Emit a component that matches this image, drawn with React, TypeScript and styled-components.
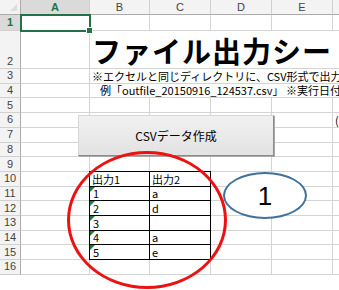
import React from "react";
import styled, { createGlobalStyle, css } from "styled-components";

const Global = createGlobalStyle`
  html, body { margin: 0; padding: 0; background: #fff; overflow: hidden; }
  body { font-family: "Noto Sans CJK JP", sans-serif; }
`;

const Sheet = styled.div`
  position: relative;
  width: 339px;
  height: 290px;
  overflow: hidden;
  background: #fff;
`;

const Grid = styled.div`
  display: grid;
  grid-template-columns: 21px 69px 60px 61px 61px 61px 40px;
  grid-template-rows: 15px 16px 38px repeat(14, 14.714px);
  width: 373px;
  font-family: "Noto Sans CJK JP", sans-serif;
  font-size: 11px;
  color: #000;
`;

const Corner = styled.div`
  box-sizing: border-box;
  background: #f3f3f3;
  border-right: 1px solid #ababab;
  border-bottom: 1px solid #ababab;
  position: relative;
  &::after {
    content: "";
    position: absolute;
    right: 3px;
    bottom: 3px;
    width: 0;
    height: 0;
    border-left: 7px solid transparent;
    border-bottom: 7px solid #dcdcdc;
  }
`;

const ColHead = styled.div<{ $selected?: boolean }>`
  box-sizing: border-box;
  display: flex;
  align-items: center;
  justify-content: center;
  background: ${(p) => (p.$selected ? "#dadada" : "#f3f3f3")};
  color: ${(p) => (p.$selected ? "#217346" : "#444")};
  font-family: "Liberation Sans", sans-serif;
  font-size: 11px;
  font-weight: ${(p) => (p.$selected ? 700 : 400)};
  border-right: 1px solid #d0d0d0;
  border-bottom: 1px solid ${(p) => (p.$selected ? "#217346" : "#ababab")};
`;

const RowHead = styled.div<{ $selected?: boolean; $bottom?: boolean }>`
  box-sizing: border-box;
  display: flex;
  align-items: ${(p) => (p.$bottom ? "flex-end" : "center")};
  justify-content: center;
  background: ${(p) => (p.$selected ? "#dadada" : "#f3f3f3")};
  color: ${(p) => (p.$selected ? "#217346" : "#444")};
  font-family: "Liberation Sans", sans-serif;
  font-size: 11px;
  font-weight: ${(p) => (p.$selected ? 700 : 400)};
  border-right: 1px solid ${(p) => (p.$selected ? "#217346" : "#ababab")};
  border-bottom: 1px solid #d0d0d0;
  line-height: 13px;
`;

const Cell = styled.div<{
  $span?: boolean;
  $boxed?: boolean;
  $top?: boolean;
  $left?: boolean;
  $flag?: boolean;
  $indent?: number;
}>`
  box-sizing: border-box;
  position: relative;
  display: flex;
  align-items: flex-end;
  white-space: nowrap;
  line-height: 13px;
  padding: 0 0 0 ${(p) => p.$indent ?? 2}px;
  border-right: 1px solid ${(p) => (p.$boxed ? "#000" : "#d4d4d4")};
  border-bottom: 1px solid ${(p) => (p.$boxed ? "#000" : "#d4d4d4")};
  ${(p) => p.$span && css`grid-column: 3 / 8; border-right: none;`}
  ${(p) =>
    p.$boxed &&
    css`
      box-shadow: ${p.$left ? "-1px 0 0 #000" : "0 0 0 transparent"},
        ${p.$top ? "0 -1px 0 #000" : "0 0 0 transparent"},
        ${p.$top && p.$left ? "-1px -1px 0 #000" : "0 0 0 transparent"};
    `}
  ${(p) =>
    p.$flag &&
    css`
      &::before {
        content: "";
        position: absolute;
        left: 0;
        top: 0;
        width: 0;
        height: 0;
        border-top: 5px solid #1e7b3c;
        border-right: 5px solid transparent;
      }
    `}
`;

const Title = styled.span`
  font-family: "Noto Sans CJK JP", sans-serif;
  font-weight: 700;
  font-size: 29px;
  line-height: 36px;
  letter-spacing: 1px;
`;

const Selection = styled.div`
  position: absolute;
  left: 20px;
  top: 14px;
  width: 71px;
  height: 18px;
  box-sizing: border-box;
  border: 2px solid #217346;
  pointer-events: none;
  &::after {
    content: "";
    position: absolute;
    right: -4px;
    bottom: -4px;
    width: 5px;
    height: 5px;
    background: #217346;
    border: 1px solid #fff;
  }
`;

const CsvButton = styled.button`
  position: absolute;
  left: 78px;
  top: 115px;
  width: 196px;
  height: 41px;
  box-sizing: border-box;
  margin: 0;
  padding: 0;
  border: 1px solid #d6d6d6;
  border-right-color: #8c8c8c;
  border-bottom-color: #8c8c8c;
  box-shadow: 1px 1px 0 #a8a8a8;
  background: linear-gradient(#f1f1f1, #e2e2e2);
  font-family: "Noto Sans CJK JP", sans-serif;
  font-size: 12px;
  color: #000;
  cursor: default;
`;

const RedCircle = styled.div`
  position: absolute;
  left: 67px;
  top: 151px;
  width: 160px;
  height: 138px;
  box-sizing: border-box;
  border: 3.5px solid #ee1111;
  border-radius: 50%;
  pointer-events: none;
`;

const BlueCallout = styled.div`
  position: absolute;
  left: 223px;
  top: 172px;
  width: 84px;
  height: 47px;
  box-sizing: border-box;
  border: 2.5px solid #41719c;
  border-radius: 50%;
  background: #fff;
  display: flex;
  align-items: center;
  justify-content: center;
  font-family: "Liberation Sans", sans-serif;
  font-size: 26px;
  color: #000;
  line-height: 1;
`;

const cols = ["A", "B", "C", "D", "E", "F"];

const tableRows: Array<[string, string]> = [
  ["1", "a"],
  ["2", "d"],
  ["3", ""],
  ["4", "a"],
  ["5", "e"],
];

export default function App() {
  const rows: React.ReactNode[] = [];
  for (let r = 1; r <= 16; r++) {
    rows.push(
      <RowHead key={`h${r}`} $selected={r === 1} $bottom={r === 2}>
        {r}
      </RowHead>
    );
    if (r >= 2 && r <= 4) {
      rows.push(<Cell key={`a${r}`} />);
      if (r === 2) {
        rows.push(
          <Cell key={`s${r}`} $span>
            <Title>ファイル出力シート</Title>
          </Cell>
        );
      } else if (r === 3) {
        rows.push(
          <Cell key={`s${r}`} $span>
            ※エクセルと同じディレクトリに、CSV形式で出力されます。
          </Cell>
        );
      } else {
        rows.push(
          <Cell key={`s${r}`} $span $indent={10}>
            例「outfile_20150916_124537.csv」 ※実行日付と時刻
          </Cell>
        );
      }
      continue;
    }
    for (let c = 0; c < 6; c++) {
      const key = `${r}-${c}`;
      if (r >= 10 && r <= 15 && (c === 1 || c === 2)) {
        const top = r === 10;
        const left = c === 1;
        let text = "";
        if (r === 10) text = c === 1 ? "出力1" : "出力2";
        else text = tableRows[r - 11][c - 1];
        rows.push(
          <Cell
            key={key}
            $boxed
            $top={top}
            $left={left}
            $flag={r >= 11 && c === 1}
            $indent={r >= 11 && c === 1 ? 3 : 2}
          >
            {text}
          </Cell>
        );
      } else if (r === 6 && c === 5) {
        rows.push(<Cell key={key}>(</Cell>);
      } else {
        rows.push(<Cell key={key} />);
      }
    }
  }

  return (
    <>
      <Global />
      <Sheet>
        <Grid>
          <Corner />
          {cols.map((c) => (
            <ColHead key={c} $selected={c === "A"}>
              {c}
            </ColHead>
          ))}
          {rows}
        </Grid>
        <Selection />
        <CsvButton>CSVデータ作成</CsvButton>
        <RedCircle />
        <BlueCallout>1</BlueCallout>
      </Sheet>
    </>
  );
}
